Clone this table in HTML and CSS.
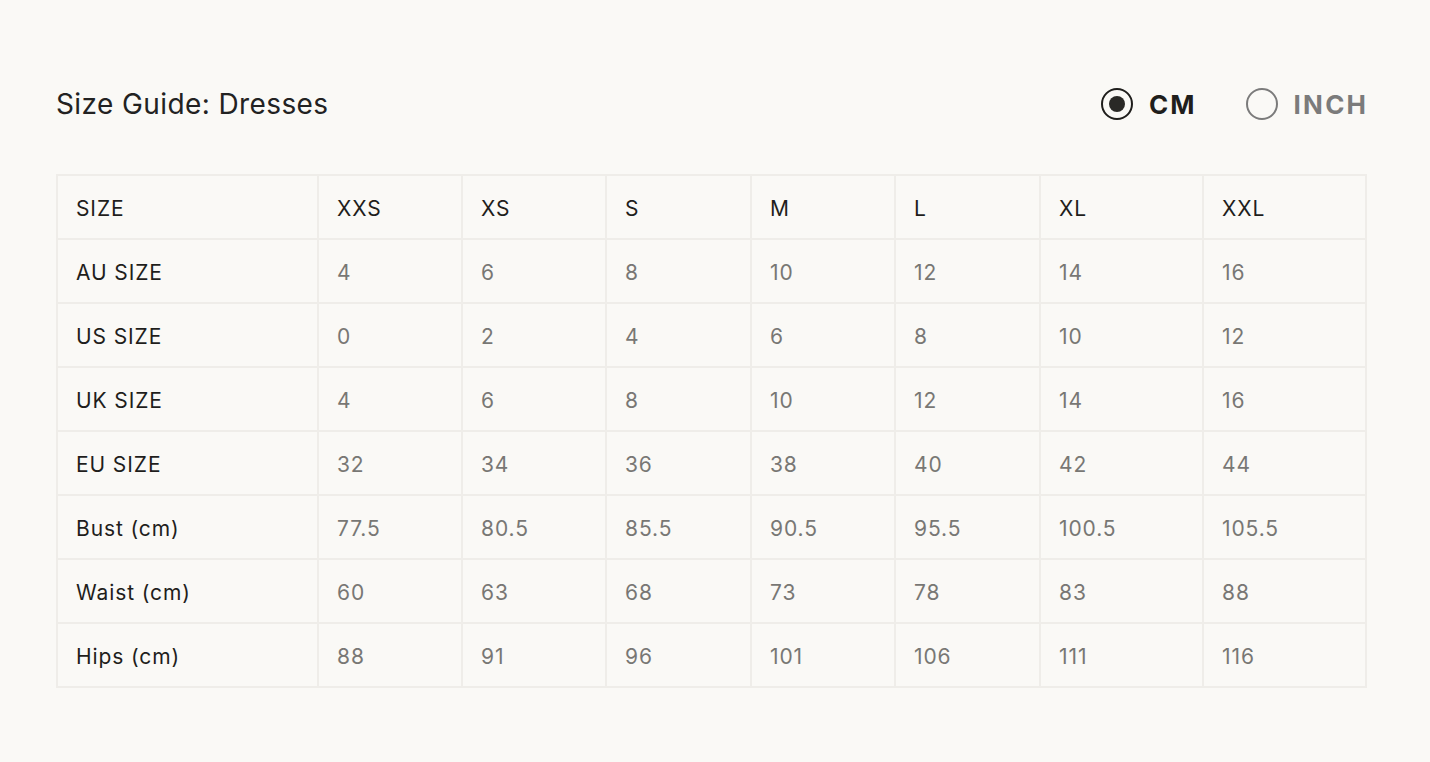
FILE: index.html
```html
<!DOCTYPE html>
<html>
<head>
<meta charset="utf-8">
<link rel="stylesheet" href="styles.css">
</head>
<body>
<div class="page">
  <div class="header">
    <h1 class="title">Size Guide: Dresses</h1>
    <div class="units">
      <label class="unit active"><span class="radio"><span class="dot"></span></span><span class="unit-label">CM</span></label>
      <label class="unit"><span class="radio"></span><span class="unit-label">INCH</span></label>
    </div>
  </div>
  <table class="sizes">
    <colgroup>
      <col class="c-label"><col class="c-s"><col class="c-s"><col class="c-m"><col class="c-s"><col class="c-m"><col class="c-l"><col class="c-l">
    </colgroup>
    <tr class="head"><td>SIZE</td><td>XXS</td><td>XS</td><td>S</td><td>M</td><td>L</td><td>XL</td><td>XXL</td></tr>
    <tr><td>AU SIZE</td><td>4</td><td>6</td><td>8</td><td>10</td><td>12</td><td>14</td><td>16</td></tr>
    <tr><td>US SIZE</td><td>0</td><td>2</td><td>4</td><td>6</td><td>8</td><td>10</td><td>12</td></tr>
    <tr><td>UK SIZE</td><td>4</td><td>6</td><td>8</td><td>10</td><td>12</td><td>14</td><td>16</td></tr>
    <tr><td>EU SIZE</td><td>32</td><td>34</td><td>36</td><td>38</td><td>40</td><td>42</td><td>44</td></tr>
    <tr><td>Bust (cm)</td><td>77.5</td><td>80.5</td><td>85.5</td><td>90.5</td><td>95.5</td><td>100.5</td><td>105.5</td></tr>
    <tr><td>Waist (cm)</td><td>60</td><td>63</td><td>68</td><td>73</td><td>78</td><td>83</td><td>88</td></tr>
    <tr><td>Hips (cm)</td><td>88</td><td>91</td><td>96</td><td>101</td><td>106</td><td>111</td><td>116</td></tr>
  </table>
</div>
</body>
</html>
```
FILE: styles.css
```css
html, body {
  margin: 0;
  padding: 0;
  background: #faf9f6;
}
body {
  font-family: "Inter", "Open Sans", sans-serif;
  color: #222;
}
.page {
  padding: 84px 64px 0 56px;
}
.header {
  display: flex;
  align-items: center;
  justify-content: space-between;
  height: 40px;
}
.title {
  margin: 0;
  font-weight: 400;
  font-size: 28px;
  letter-spacing: 0.4px;
  color: #222;
}
.units {
  display: flex;
  align-items: center;
  gap: 51px;
}
.unit {
  display: flex;
  align-items: center;
  gap: 16px;
  font-weight: 700;
  font-size: 26px;
  letter-spacing: 2.2px;
  color: #7b7b7b;
}
.unit-label {
  margin-right: -2.2px;
}
.unit.active {
  color: #1f1e1c;
}
.radio {
  width: 28px;
  height: 28px;
  border: 2px solid #7b7b7b;
  border-radius: 50%;
  display: flex;
  align-items: center;
  justify-content: center;
  box-sizing: content-box;
}
.unit.active .radio {
  border-color: #1f1e1c;
}
.dot {
  width: 16px;
  height: 16px;
  border-radius: 50%;
  background: #2a2926;
}
.sizes {
  margin-top: 50px;
  border-collapse: collapse;
  table-layout: fixed;
  width: 1311px;
}
.c-label { width: 261px; }
.c-s { width: 144px; }
.c-m { width: 145px; }
.c-l { width: 163px; }
.sizes td {
  border: 2px solid #efede9;
  height: 59px;
  padding: 3px 0 0 18px;
  font-size: 21px;
  letter-spacing: 0.9px;
  color: #787774;
  vertical-align: middle;
}
.sizes td:first-child,
.sizes tr.head td {
  color: #1f1e1c;
}
```
